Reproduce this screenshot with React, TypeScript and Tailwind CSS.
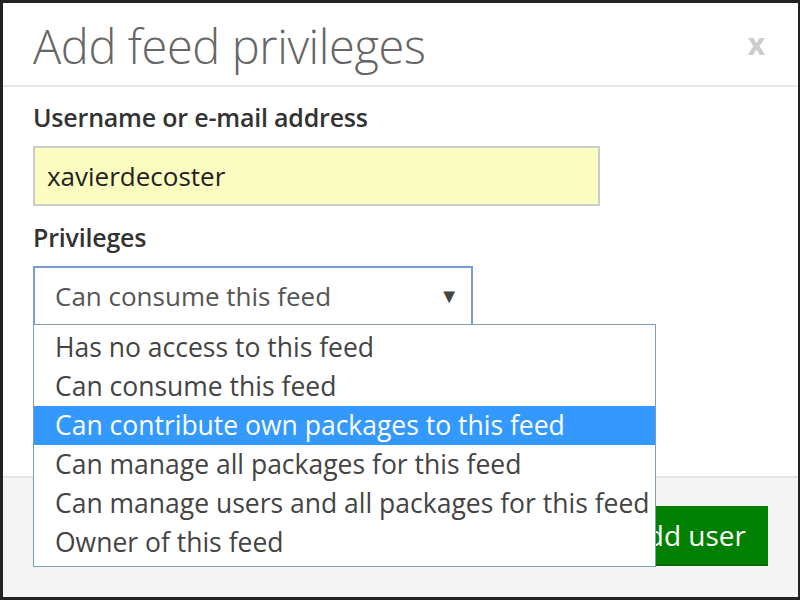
import React from "react";

const OPTIONS = [
  "Has no access to this feed",
  "Can consume this feed",
  "Can contribute own packages to this feed",
  "Can manage all packages for this feed",
  "Can manage users and all packages for this feed",
  "Owner of this feed",
];

const font = { fontFamily: "'Open Sans', 'Noto Sans', sans-serif" };

export default function App() {
  return (
    <div
      className="flex h-[600px] w-[800px] flex-col bg-[#222] pb-[3px] pl-[3px] pr-[2px] pt-[3px]"
      style={font}
    >
      <div className="flex flex-1 flex-col bg-white">
        {/* header */}
        <div className="flex h-[84px] shrink-0 items-center justify-between border-b-2 border-[#e8e8e8] pl-[30px] pr-[33px]">
          <h1 className="mt-[4px] text-[47px] font-light leading-none tracking-[-0.4px] text-[#666]">
            Add feed privileges
          </h1>
          <span className="text-[30px] font-bold leading-none text-[#ccc]">x</span>
        </div>

        {/* body */}
        <div className="flex flex-1 flex-col px-[30px] pt-[14px]">
          <label className="text-[25px] font-semibold leading-[33px] tracking-[-0.2px] text-[#333]">
            Username or e-mail address
          </label>
          <div className="mt-[12px] flex h-[60px] w-[567px] items-center border-2 border-[#ccc] bg-[#fbfcc0] px-[12px] text-[26px] text-[#222]">
            xavierdecoster
          </div>
          <label className="mt-[15px] text-[25px] font-semibold leading-[33px] tracking-[-0.2px] text-[#333]">
            Privileges
          </label>
          <div className="relative mt-[12px] w-[440px]">
            <div className="flex h-[60px] items-center justify-between border-2 border-[#7a9cd3] pl-[20px] pr-[12px] text-[26px] text-[#555]">
              <span>Can consume this feed</span>
              <span className="text-[20px] text-[#444]">▼</span>
            </div>
            <div className="absolute left-0 top-[58px] z-10 w-[623px] border border-[#7f9db9] bg-white pb-[4px] pt-[3px]">
              {OPTIONS.map((o, i) => (
                <div
                  key={o}
                  className={
                    i === 2
                      ? "flex h-[39px] items-center bg-[#3399ff] pl-[21px] text-[26.5px] text-white"
                      : "flex h-[39px] items-center pl-[21px] text-[26.5px] text-[#444]"
                  }
                >
                  {o}
                </div>
              ))}
            </div>
          </div>
        </div>

        {/* footer */}
        <div className="flex h-[121px] shrink-0 justify-end border-t-2 border-[#e3e3e3] bg-[#f4f4f4] pr-[30px] pt-[28px]">
          <div className="flex h-[60px] items-center border-b-2 border-[#006400] bg-[#008000] px-[22px] text-[28px] text-white">
            Add user
          </div>
        </div>
      </div>
    </div>
  );
}
